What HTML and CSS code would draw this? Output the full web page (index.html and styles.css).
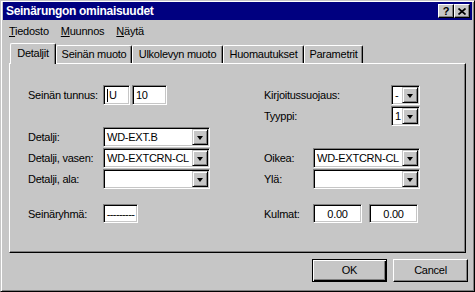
FILE: index.html
```html
<!DOCTYPE html>
<html>
<head>
    <title>Seinärungon ominaisuudet</title>
    <link rel="stylesheet" href="styles.css">
</head>
<body>
    <div id="window">
        <div id="title-bar">
            <span id="title">Seinärungon ominaisuudet</span>
            <div class="caption-buttons">
                <div class="caption-btn">?</div>
                <div class="caption-btn">
                    <svg width="8" height="7" viewBox="0 0 8 7">
                        <path d="M0.5 0.5 L7.5 6.5 M7.5 0.5 L0.5 6.5" stroke="#000" stroke-width="1.7"/>
                    </svg>
                </div>
            </div>
        </div>

        <div id="menu-bar">
            <span class="menu-item"><u>T</u>iedosto</span>
            <span class="menu-item"><u>M</u>uunnos</span>
            <span class="menu-item"><u>N</u>äytä</span>
        </div>

        <div id="tabs">
            <div class="tab active" style="width: 46px">Detaljit</div>
            <div class="tab" style="width: 76px">Seinän muoto</div>
            <div class="tab" style="width: 91px">Ulkolevyn muoto</div>
            <div class="tab" style="width: 81px">Huomautukset</div>
            <div class="tab" style="width: 59px">Parametrit</div>
        </div>

        <div id="panel">
            <div class="form">
                <!-- rivi 1 -->
                <div class="label">Seinän tunnus:</div>
                <div class="pair">
                    <div class="field short"><span class="caret"></span>U</div>
                    <div class="field num">10</div>
                </div>
                <div></div>
                <div class="right-row">
                    <span class="label">Kirjoitussuojaus:</span>
                    <div class="combo small"><span class="value">-</span><span class="arrow"></span></div>
                </div>

                <!-- rivi 2 -->
                <div></div>
                <div></div>
                <div></div>
                <div class="right-row">
                    <span class="label">Tyyppi:</span>
                    <div class="combo small"><span class="value">1</span><span class="arrow"></span></div>
                </div>

                <!-- rivi 3 -->
                <div class="label">Detalji:</div>
                <div class="combo"><span class="value">WD-EXT.B</span><span class="arrow"></span></div>
                <div></div>
                <div></div>
                <div></div>

                <!-- rivi 4 -->
                <div class="label">Detalji, vasen:</div>
                <div class="combo"><span class="value">WD-EXTCRN-CL</span><span class="arrow"></span></div>
                <div></div>
                <div class="label">Oikea:</div>
                <div class="combo"><span class="value">WD-EXTCRN-CL</span><span class="arrow"></span></div>

                <!-- rivi 5 -->
                <div class="label">Detalji, ala:</div>
                <div class="combo"><span class="value"></span><span class="arrow"></span></div>
                <div></div>
                <div class="label">Ylä:</div>
                <div class="combo"><span class="value"></span><span class="arrow"></span></div>

                <div class="spacer"></div>

                <!-- rivi 6 -->
                <div class="label">Seinäryhmä:</div>
                <div class="field group">---------</div>
                <div></div>
                <div class="label">Kulmat:</div>
                <div class="pair wide">
                    <div class="field angle">0.00</div>
                    <div class="field angle">0.00</div>
                </div>
            </div>
        </div>

        <div id="buttons">
            <div class="btn default">OK</div>
            <div class="btn">Cancel</div>
        </div>
    </div>
</body>
</html>
```

FILE: styles.css
```css
body {
    margin: 0;
    padding: 0;
    font-family: "Liberation Sans", Arial, sans-serif;
    font-size: 11px;
    letter-spacing: -0.25px;
    color: #000;
    background-color: #c6c6c6;
}

#window {
    width: 475px;
    height: 292px;
    box-sizing: border-box;
    padding: 1px 2px 2px 2px;
    border: 1px solid;
    border-color: #c6c6c6 #000 #000 #c6c6c6;
    box-shadow: inset 1px 1px #fff, inset -1px -1px #808080;
    background-color: #c6c6c6;
}

#title-bar {
    height: 18px;
    background-color: #000080;
    display: flex;
    align-items: center;
    justify-content: space-between;
    padding: 0 2px 0 3px;
}

#title {
    color: #fff;
    font-weight: bold;
    font-size: 12px;
    letter-spacing: -0.3px;
    line-height: 18px;
}

.caption-buttons {
    display: flex;
}

.caption-btn {
    width: 16px;
    height: 14px;
    box-sizing: border-box;
    background-color: #c6c6c6;
    border: 1px solid;
    border-color: #fff #000 #000 #fff;
    box-shadow: inset -1px -1px #808080;
    display: flex;
    align-items: center;
    justify-content: center;
    font-weight: bold;
    font-size: 11px;
    line-height: 12px;
    letter-spacing: 0;
}

#menu-bar {
    height: 18px;
    padding-top: 2px;
    line-height: 18px;
    display: flex;
}

.menu-item {
    padding: 0 6px;
}

#tabs {
    height: 23px;
    display: flex;
    align-items: flex-end;
    padding-left: 7px;
}

.tab {
    height: 18px;
    box-sizing: border-box;
    border-top: 1px solid #fff;
    border-left: 1px solid #fff;
    border-right: 1px solid #000;
    border-radius: 2px 2px 0 0;
    box-shadow: inset -1px 0 #808080;
    text-align: center;
    line-height: 16px;
    white-space: nowrap;
    background-color: #c6c6c6;
}

.tab.active {
    height: 21px;
    margin-bottom: -1px;
    position: relative;
    z-index: 1;
    line-height: 18px;
}

#panel {
    width: 457px;
    height: 190px;
    margin-left: 6px;
    box-sizing: border-box;
    border: 1px solid;
    border-color: #fff #000 #000 #fff;
    box-shadow: inset -1px -1px #808080;
    padding: 21px 0 0 18px;
}

.form {
    display: grid;
    grid-template-columns: 75px 107px 54px 49px 107px;
    grid-template-rows: 21px 21px 21px 21px 21px 14px 19px;
    align-items: start;
}

.label {
    height: 20px;
    line-height: 20px;
    white-space: nowrap;
}

.spacer {
    grid-column: 1 / -1;
}

.right-row {
    grid-column: 4 / 6;
    display: flex;
    justify-content: space-between;
}

.pair {
    display: flex;
    gap: 2px;
}

.pair.wide {
    gap: 7px;
}

.field {
    height: 20px;
    box-sizing: border-box;
    background-color: #fff;
    border: 1px solid;
    border-color: #808080 #fff #fff #808080;
    box-shadow: inset 1px 1px #000, inset -1px -1px #c6c6c6;
    padding-left: 3px;
    line-height: 18px;
    white-space: nowrap;
    display: flex;
    align-items: center;
}

.field.short {
    width: 27px;
}

.field.num {
    width: 35px;
}

.caret {
    width: 1px;
    height: 13px;
    background-color: #000;
    margin-right: 1px;
}

.field.group {
    width: 35px;
    height: 19px;
    justify-content: center;
    padding-left: 0;
    letter-spacing: -0.6px;
}

.field.angle {
    width: 49px;
    height: 19px;
    justify-content: center;
    padding-left: 0;
}

.combo {
    width: 107px;
    height: 20px;
    box-sizing: border-box;
    background-color: #fff;
    border: 1px solid;
    border-color: #808080 #fff #fff #808080;
    box-shadow: inset 1px 1px #000, inset -1px -1px #c6c6c6;
    padding: 1px;
    display: flex;
}

.combo.small {
    width: 29px;
}

.combo .value {
    flex: 1;
    padding-left: 2px;
    line-height: 16px;
    white-space: nowrap;
    overflow: hidden;
}

.combo .arrow {
    width: 16px;
    height: 16px;
    box-sizing: border-box;
    background-color: #c6c6c6;
    border: 1px solid;
    border-color: #c6c6c6 #000 #000 #c6c6c6;
    box-shadow: inset 1px 1px #fff, inset -1px -1px #808080;
    display: flex;
    align-items: center;
    justify-content: center;
}

.combo .arrow::after {
    content: "";
    border-left: 3.5px solid transparent;
    border-right: 3.5px solid transparent;
    border-top: 4px solid #000;
    margin-top: 1px;
}

#buttons {
    display: flex;
    justify-content: flex-end;
    gap: 6px;
    margin-top: 6px;
    padding-right: 4px;
}

.btn {
    width: 75px;
    height: 23px;
    box-sizing: border-box;
    border: 1px solid;
    border-color: #fff #000 #000 #fff;
    box-shadow: inset -1px -1px #808080;
    text-align: center;
    line-height: 21px;
}

.btn.default {
    border-color: #000;
    box-shadow: inset 1px 1px #fff, inset -1px -1px #000, inset -2px -2px #808080;
}
```
